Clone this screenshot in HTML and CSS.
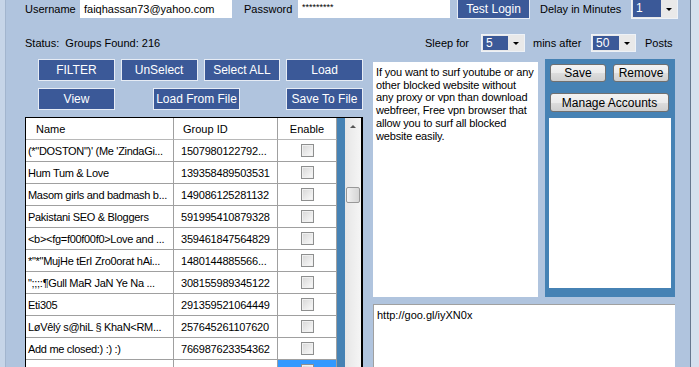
FILE: index.html
```html
<!DOCTYPE html>
<html lang="en">
<head>
    <meta charset="UTF-8">
    <meta name="viewport" content="width=device-width, initial-scale=1.0">
    <title>Group Poster</title>
    <link rel="stylesheet" href="styles.css">
</head>
<body>
<div class="window">
    <div class="edge-left"></div>

    <div class="form">
        <div class="top-row">
            <span class="lbl lbl-user">Username</span>
            <div class="field field-user">faiqhassan73@yahoo.com</div>
            <span class="lbl lbl-pass">Password</span>
            <div class="field field-pass">*********</div>
            <button class="btn btn-login">Test Login</button>
            <span class="lbl lbl-delay">Delay in Minutes</span>
            <div class="combo combo-delay">
                <span class="combo-value">1</span>
                <span class="combo-arrow"></span>
            </div>
        </div>

        <div class="status-row">
            <span class="status">Status:&nbsp; Groups Found: 216</span>
            <span class="lbl lbl-sleep">Sleep for</span>
            <div class="combo combo-sleep">
                <span class="combo-value">5</span>
                <span class="combo-arrow"></span>
            </div>
            <span class="lbl lbl-mins">mins after</span>
            <div class="combo combo-posts">
                <span class="combo-value">50</span>
                <span class="combo-arrow"></span>
            </div>
            <span class="lbl lbl-posts">Posts</span>
        </div>

        <div class="main">
            <div class="left-col">
                <div class="btn-row">
                    <button class="btn">FILTER</button>
                    <button class="btn">UnSelect</button>
                    <button class="btn">Select ALL</button>
                    <button class="btn">Load</button>
                </div>
                <div class="btn-row btn-row-2">
                    <button class="btn">View</button>
                    <button class="btn btn-wide">Load From File</button>
                    <button class="btn btn-last">Save To File</button>
                </div>

                <div class="grid">
                    <table class="groups">
                        <colgroup>
                            <col class="c-name">
                            <col class="c-id">
                            <col class="c-enable">
                        </colgroup>
                        <tr class="head">
                            <td class="h-name">Name</td>
                            <td class="h-id">Group ID</td>
                            <td class="enable">Enable</td>
                        </tr>
                        <tr>
                            <td>(*"DOSTON")' (Me 'ZindaGi...</td>
                            <td class="gid">1507980122792...</td>
                            <td class="enable"><span class="chk"></span></td>
                        </tr>
                        <tr>
                            <td>Hum Tum &amp; Love</td>
                            <td class="gid">139358489503531</td>
                            <td class="enable"><span class="chk"></span></td>
                        </tr>
                        <tr>
                            <td>Masom girls and badmash b...</td>
                            <td class="gid">149086125281132</td>
                            <td class="enable"><span class="chk"></span></td>
                        </tr>
                        <tr>
                            <td>Pakistani SEO &amp; Bloggers</td>
                            <td class="gid">591995410879328</td>
                            <td class="enable"><span class="chk"></span></td>
                        </tr>
                        <tr>
                            <td>&lt;b&gt;&lt;fg=f00f00f0&gt;Love and ...</td>
                            <td class="gid">359461847564829</td>
                            <td class="enable"><span class="chk"></span></td>
                        </tr>
                        <tr>
                            <td>*"*"MujHe tErI Zro0orat hAi...</td>
                            <td class="gid">1480144885566...</td>
                            <td class="enable"><span class="chk"></span></td>
                        </tr>
                        <tr>
                            <td>";;;:¶Gull MaR JaN Ye Na ...</td>
                            <td class="gid">308155989345122</td>
                            <td class="enable"><span class="chk"></span></td>
                        </tr>
                        <tr>
                            <td>Eti305</td>
                            <td class="gid">291359521064449</td>
                            <td class="enable"><span class="chk"></span></td>
                        </tr>
                        <tr>
                            <td>LøVêlý s@hiL § KhaN&lt;RM...</td>
                            <td class="gid">257645261107620</td>
                            <td class="enable"><span class="chk"></span></td>
                        </tr>
                        <tr>
                            <td>Add me closed:) :) :)</td>
                            <td class="gid">766987623354362</td>
                            <td class="enable"><span class="chk"></span></td>
                        </tr>
                        <tr>
                            <td>D.D.T.Z.D...</td>
                            <td class="gid">192037531900...</td>
                            <td class="enable selected"><span class="chk"></span></td>
                        </tr>
                    </table>
                    <div class="grid-fill"></div>
                    <div class="scrollbar">
                        <div class="sb-up"></div>
                        <div class="sb-thumb"></div>
                        <div class="sb-down"></div>
                    </div>
                </div>
            </div>

            <div class="right-col">
                <div class="upper">
                    <div class="text-box message">If you want to surf youtube or any
other blocked website without
any proxy or vpn than download
webfreer, Free vpn browser that
allow you to surf all blocked
website easily.</div>
                    <div class="accounts">
                        <div class="acc-buttons">
                            <button class="win-btn">Save</button>
                            <button class="win-btn">Remove</button>
                        </div>
                        <button class="win-btn manage">Manage Accounts</button>
                        <div class="acc-list"></div>
                    </div>
                </div>
                <div class="text-box links">http://goo.gl/iyXN0x</div>
            </div>
        </div>
    </div>

    <div class="edge-right"></div>
</div>
</body>
</html>
```

FILE: styles.css
```css
body {
    margin: 0;
    font-family: "Liberation Sans", Arial, sans-serif;
    font-size: 11px;
    color: #000;
    background-color: #b0c4de;
    overflow: hidden;
}
.window {
    display: flex;
    width: 699px;
    height: 367px;
    overflow: hidden;
    background-color: #b0c4de;
}
.edge-left {
    width: 5px;
    background-color: #c6d5e8;
    border-right: 1px solid #a2b5ce;
}
.edge-right {
    width: 8px;
    background-color: #d5e0ee;
    border-left: 1px solid #66778f;
}
.form {
    flex: 1;
    min-width: 0;
    padding-left: 19px;
}

/* top line */
.top-row {
    display: flex;
    height: 19px;
}
.lbl {
    line-height: 19px;
    white-space: nowrap;
}
.lbl-user {
    width: 55px;
}
.field {
    box-sizing: border-box;
    height: 18px;
    line-height: 18px;
    padding-left: 4px;
    background-color: #fff;
    white-space: nowrap;
}
.field-user {
    width: 152px;
}
.lbl-pass {
    margin-left: 12px;
    width: 54px;
}
.field-pass {
    width: 152px;
    font-size: 9px;
    line-height: 14px;
}
.btn {
    box-sizing: border-box;
    padding: 0;
    background-color: #3b5998;
    color: #fff;
    border: 1px solid #e6ecf5;
    font-family: "Liberation Sans", Arial, sans-serif;
    font-size: 12px;
    white-space: nowrap;
}
.btn-login {
    margin-left: 7px;
    margin-top: -1px;
    width: 73px;
    height: 20px;
    border-top: none;
}
.lbl-delay {
    margin-left: 10px;
    width: 91px;
}

/* combo boxes */
.combo {
    display: flex;
    box-sizing: border-box;
    height: 18px;
    border: 1px solid #eef2f7;
    background-color: #e9e9e9;
}
.combo-value {
    flex: 1;
    margin: 1px 0 1px 1px;
    padding-left: 3px;
    background-color: #3b5998;
    color: #fff;
    font-size: 12px;
    line-height: 14px;
}
.combo-arrow {
    width: 16px;
    display: flex;
    align-items: center;
    justify-content: center;
}
.combo-arrow::after {
    content: "";
    border-left: 3px solid transparent;
    border-right: 3px solid transparent;
    border-top: 3px solid #000;
}
.combo-delay {
    width: 47px;
    height: 19px;
    border-top: none;
}
.combo-delay .combo-value {
    margin-top: 0;
    line-height: 17px;
}

/* status line */
.status-row {
    display: flex;
    align-items: center;
    height: 18px;
    margin-top: 15px;
}
.status {
    width: 400px;
    white-space: nowrap;
}
.lbl-sleep {
    width: 56px;
}
.combo-sleep {
    width: 44px;
}
.lbl-mins {
    margin-left: 8px;
    width: 58px;
}
.combo-posts {
    width: 45px;
}
.lbl-posts {
    margin-left: 9px;
}

/* main area */
.main {
    display: flex;
    margin-top: 7px;
}
.left-col {
    width: 338px;
}
.btn-row {
    display: flex;
    gap: 6px;
    padding-left: 13px;
}
.btn-row .btn {
    width: 77px;
    height: 22px;
}
.btn-row-2 {
    margin-top: 7px;
}
.btn-row .btn-wide {
    width: 87px;
    margin-left: 32px;
}
.btn-row .btn-last {
    margin-left: auto;
}

/* data grid */
.grid {
    display: flex;
    margin-top: 7px;
    height: 262px;
    border: 1px solid #000;
    border-bottom: none;
    overflow: hidden;
}
.groups {
    width: 311px;
    table-layout: fixed;
    border-collapse: separate;
    border-spacing: 0;
    background-color: #fff;
    align-self: flex-start;
}
.c-name {
    width: 148px;
}
.c-id {
    width: 104px;
}
.c-enable {
    width: 59px;
}
.groups tr {
    height: 22px;
}
.groups td {
    padding: 0 0 0 2px;
    border-right: 1px solid #a0a0a0;
    border-bottom: 1px solid #a0a0a0;
    white-space: nowrap;
    overflow: hidden;
    letter-spacing: -0.3px;
}
.groups .head td {
    letter-spacing: 0;
    border-bottom-color: #b8b8b8;
}
.groups .h-name {
    padding-left: 10px;
}
.groups .h-id {
    padding-left: 9px;
}
.groups .gid {
    padding-left: 7px;
    letter-spacing: -0.2px;
}
.groups .enable {
    padding: 0;
    text-align: center;
}
.groups .selected {
    background-color: #3399ff;
}
.chk {
    display: inline-block;
    width: 13px;
    height: 13px;
    box-sizing: border-box;
    border: 1px solid #8e8f8f;
    background: linear-gradient(135deg, #d6d6d6, #fbfbfb);
    box-shadow: inset 0 0 0 1px #f0f0f0;
    vertical-align: middle;
}
.grid-fill {
    width: 9px;
    background-color: #4682b4;
}
.scrollbar {
    width: 16px;
    background: linear-gradient(to right, #e6e6e6, #f5f5f5);
    border-right: 1px solid #000;
    display: flex;
    flex-direction: column;
    align-items: center;
}
.sb-up {
    height: 17px;
    width: 16px;
    display: flex;
    align-items: center;
    justify-content: center;
}
.sb-up::after {
    content: "";
    border-left: 3px solid transparent;
    border-right: 3px solid transparent;
    border-bottom: 3px solid #555;
}
.sb-thumb {
    margin-top: 52px;
    width: 14px;
    height: 16px;
    box-sizing: border-box;
    border: 1px solid #989898;
    border-radius: 2px;
    background: linear-gradient(to right, #f2f2f2, #e2e2e2 50%, #d6d6d6);
}
.sb-down {
    margin-top: 157px;
    height: 17px;
    width: 16px;
    display: flex;
    align-items: center;
    justify-content: center;
}
.sb-down::after {
    content: "";
    border-left: 3px solid transparent;
    border-right: 3px solid transparent;
    border-top: 3px solid #555;
}

/* right side */
.right-col {
    margin-left: 10px;
    width: 302px;
}
.upper {
    display: flex;
}
.text-box {
    box-sizing: border-box;
    background-color: #fff;
    padding: 4px 3px;
    line-height: 12.7px;
    white-space: pre;
    overflow: hidden;
}
.message {
    width: 165px;
    height: 235px;
    margin-top: 3px;
    letter-spacing: -0.15px;
}
.accounts {
    display: flex;
    flex-direction: column;
    box-sizing: border-box;
    margin-left: 7px;
    width: 130px;
    height: 238px;
    padding: 5px 4px 9px;
    background-color: #4682b4;
}
.acc-buttons {
    display: flex;
    justify-content: space-between;
    padding: 0 2px 0 1px;
}
.win-btn {
    box-sizing: border-box;
    width: 56px;
    height: 18px;
    padding: 0;
    border: 1px solid #707070;
    border-radius: 3px;
    background: linear-gradient(#f3f3f3 0%, #ebebeb 50%, #dddddd 51%, #cfcfcf 100%);
    font-family: "Liberation Sans", Arial, sans-serif;
    font-size: 12px;
    color: #000;
}
.manage {
    width: auto;
    height: 19px;
    margin: 11px 2px 0 1px;
}
.acc-list {
    flex: 1;
    margin-top: 6px;
    background-color: #fff;
}
.links {
    margin-top: 7px;
    height: 80px;
    border-top: 1px solid #a0a0a0;
    border-left: 1px solid #a0a0a0;
}
```
